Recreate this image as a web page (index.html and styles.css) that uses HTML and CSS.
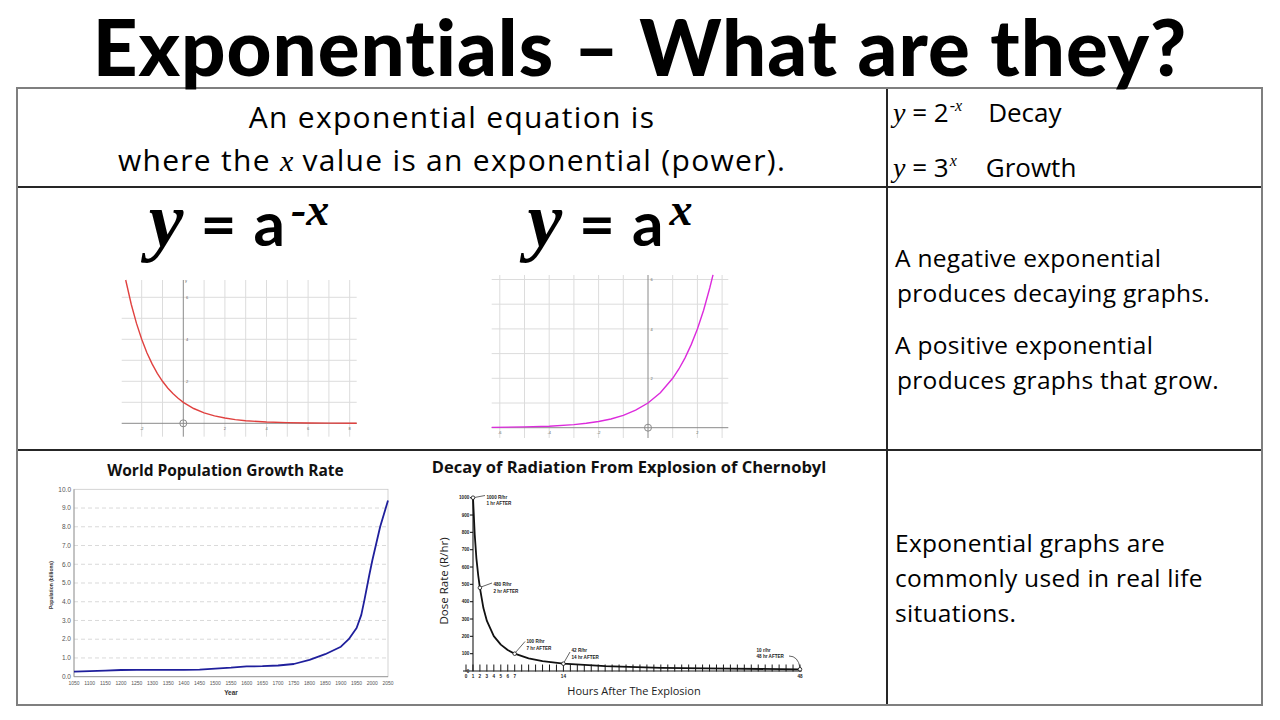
FILE: index.html
```html
<!DOCTYPE html>
<html lang="en">
<head>
<meta charset="utf-8">
<title>Exponentials – What are they?</title>
<link rel="stylesheet" href="styles.css">
</head>
<body>
<h1 class="title">Exponentials – What are they?</h1>
<div class="table">
  <div class="cell def c-left r1">
    <p>An exponential equation is</p>
    <p>where the <span class="var">x</span> value is an exponential (power).</p>
  </div>
  <div class="cell examples r1">
    <p><span class="m">y</span> = 2<span class="ex">-x</span><span class="lbl">Decay</span></p>
    <p><span class="m">y</span> = 3<span class="ex">x</span><span class="lbl lbl2">Growth</span></p>
  </div>

  <div class="cell graphs c-left r2">
    <div class="gcol gcol1">
      <div class="formula"><span class="fy">y</span> = a<span class="fsup">-x</span></div>
      <svg class="plot" width="242" height="172" viewBox="0 0 242 172">
        <g class="grid">
          <line x1="23.7" y1="10" x2="23.7" y2="166.7"/>
          <line x1="44.5" y1="10" x2="44.5" y2="166.7"/>
          <line x1="86.1" y1="10" x2="86.1" y2="166.7"/>
          <line x1="106.9" y1="10" x2="106.9" y2="166.7"/>
          <line x1="127.7" y1="10" x2="127.7" y2="166.7"/>
          <line x1="148.5" y1="10" x2="148.5" y2="166.7"/>
          <line x1="169.3" y1="10" x2="169.3" y2="166.7"/>
          <line x1="190.1" y1="10" x2="190.1" y2="166.7"/>
          <line x1="210.9" y1="10" x2="210.9" y2="166.7"/>
          <line x1="231.7" y1="10" x2="231.7" y2="166.7"/>
          <line x1="3.7" y1="132.3" x2="238.7" y2="132.3"/>
          <line x1="3.7" y1="111.3" x2="238.7" y2="111.3"/>
          <line x1="3.7" y1="90.3" x2="238.7" y2="90.3"/>
          <line x1="3.7" y1="69.3" x2="238.7" y2="69.3"/>
          <line x1="3.7" y1="48.3" x2="238.7" y2="48.3"/>
          <line x1="3.7" y1="27.3" x2="238.7" y2="27.3"/>
        </g>
        <g class="axis">
          <line x1="65.3" y1="10" x2="65.3" y2="166.7"/>
          <line x1="3.7" y1="153.3" x2="238.7" y2="153.3"/>
          <circle cx="65.3" cy="153.3" r="3.5"/>
        </g>
        <g class="tick">
          <text x="67" y="12">y</text>
          <text x="68" y="29">6</text>
          <text x="68" y="71">4</text>
          <text x="68" y="113">2</text>
          <text x="23.7" y="159.5" text-anchor="middle">-2</text>
          <text x="106.9" y="159.5" text-anchor="middle">2</text>
          <text x="148.5" y="159.5" text-anchor="middle">4</text>
          <text x="190.1" y="159.5" text-anchor="middle">6</text>
          <text x="231.7" y="159.5" text-anchor="middle">8</text>
        </g>
        <polyline class="curve-red" points="7.7,10 13.3,34.5 18.5,53.4 23.7,69.3 28.9,82.7 34.1,93.9 39.3,103.4 44.5,111.3 49.7,118 54.9,123.6 60.1,128.3 65.3,132.3 75.7,138.5 86.1,142.8 96.5,145.9 106.9,148.05 117.3,149.6 127.7,150.7 148.5,152 169.3,152.6 190.1,153 210.9,153.1 238.7,153.3"/>
      </svg>
    </div>
    <div class="gcol gcol2">
      <div class="formula"><span class="fy">y</span> = a<span class="fsup">x</span></div>
      <svg class="plot" width="244" height="172" viewBox="0 0 244 172">
        <g class="grid">
          <line x1="11.8" y1="5" x2="11.8" y2="168"/>
          <line x1="36.5" y1="5" x2="36.5" y2="168"/>
          <line x1="61.2" y1="5" x2="61.2" y2="168"/>
          <line x1="85.9" y1="5" x2="85.9" y2="168"/>
          <line x1="110.6" y1="5" x2="110.6" y2="168"/>
          <line x1="135.3" y1="5" x2="135.3" y2="168"/>
          <line x1="184.7" y1="5" x2="184.7" y2="168"/>
          <line x1="209.4" y1="5" x2="209.4" y2="168"/>
          <line x1="234.1" y1="5" x2="234.1" y2="168"/>
          <line x1="3.7" y1="133" x2="240.3" y2="133"/>
          <line x1="3.7" y1="108.3" x2="240.3" y2="108.3"/>
          <line x1="3.7" y1="83.6" x2="240.3" y2="83.6"/>
          <line x1="3.7" y1="58.9" x2="240.3" y2="58.9"/>
          <line x1="3.7" y1="34.2" x2="240.3" y2="34.2"/>
          <line x1="3.7" y1="9.5" x2="240.3" y2="9.5"/>
        </g>
        <g class="axis">
          <line x1="160" y1="5" x2="160" y2="168"/>
          <line x1="3.7" y1="157.7" x2="240.3" y2="157.7"/>
          <circle cx="160" cy="157.7" r="3.5"/>
        </g>
        <g class="tick">
          <text x="162.5" y="11">6</text>
          <text x="162.5" y="60.5">4</text>
          <text x="162.5" y="110">2</text>
          <text x="11.8" y="164" text-anchor="middle">-6</text>
          <text x="61.2" y="164" text-anchor="middle">-4</text>
          <text x="110.6" y="164" text-anchor="middle">-2</text>
          <text x="209.4" y="164" text-anchor="middle">2</text>
        </g>
        <polyline class="curve-pink" points="3.7,157.4 36.5,156.9 61.2,156.2 85.9,154.6 98.25,153.3 110.6,151.5 122.95,149 135.3,145.35 147.65,140.2 160,133 172.35,122.8 184.7,108.3 190.9,99 197.05,87.85 203.2,74.6 209.4,58.9 215.6,40.2 221.75,18 225,4.8"/>
      </svg>
    </div>
  </div>
  <div class="cell notes r2">
    <p>A negative exponential<br><span class="ind">produces decaying graphs.</span></p>
    <p>A positive exponential<br><span class="ind">produces graphs that grow.</span></p>
  </div>

  <div class="cell real c-left">
    <svg class="chart" width="360" height="249" viewBox="0 0 360 249">
      <text class="ctitle" x="185.5" y="21" text-anchor="middle">World Population Growth Rate</text>
      <g class="dash">
        <line x1="34" y1="202.96" x2="348" y2="202.96"/>
        <line x1="34" y1="184.22" x2="348" y2="184.22"/>
        <line x1="34" y1="165.48" x2="348" y2="165.48"/>
        <line x1="34" y1="146.74" x2="348" y2="146.74"/>
        <line x1="34" y1="128" x2="348" y2="128"/>
        <line x1="34" y1="109.26" x2="348" y2="109.26"/>
        <line x1="34" y1="90.52" x2="348" y2="90.52"/>
        <line x1="34" y1="71.78" x2="348" y2="71.78"/>
        <line x1="34" y1="53.04" x2="348" y2="53.04"/>
      </g>
      <rect class="frame" x="34" y="34.3" width="314" height="187.4"/>
      <g class="paxis">
        <line x1="34" y1="34.3" x2="34" y2="221.7"/>
        <line x1="34" y1="221.7" x2="348" y2="221.7"/>
      </g>
      <g class="plabel" text-anchor="end">
        <text x="31" y="36.5">10.0</text>
        <text x="31" y="55.2">9.0</text>
        <text x="31" y="74">8.0</text>
        <text x="31" y="92.7">7.0</text>
        <text x="31" y="111.5">6.0</text>
        <text x="31" y="130.2">5.0</text>
        <text x="31" y="149">4.0</text>
        <text x="31" y="167.7">3.0</text>
        <text x="31" y="186.4">2.0</text>
        <text x="31" y="205.2">1.0</text>
        <text x="31" y="223.9">0.0</text>
      </g>
      <g class="xlabel" text-anchor="middle">
        <text x="34" y="230">1050</text>
        <text x="49.7" y="230">1100</text>
        <text x="65.4" y="230">1150</text>
        <text x="81.1" y="230">1200</text>
        <text x="96.8" y="230">1250</text>
        <text x="112.5" y="230">1300</text>
        <text x="128.2" y="230">1350</text>
        <text x="143.9" y="230">1400</text>
        <text x="159.6" y="230">1450</text>
        <text x="175.3" y="230">1500</text>
        <text x="191" y="230">1550</text>
        <text x="206.7" y="230">1600</text>
        <text x="222.4" y="230">1650</text>
        <text x="238.1" y="230">1700</text>
        <text x="253.8" y="230">1750</text>
        <text x="269.5" y="230">1800</text>
        <text x="285.2" y="230">1850</text>
        <text x="300.9" y="230">1900</text>
        <text x="316.6" y="230">1950</text>
        <text x="332.3" y="230">2000</text>
        <text x="348" y="230">2050</text>
      </g>
      <text class="axt" x="191" y="240" text-anchor="middle">Year</text>
      <text class="axt-s" transform="translate(13,130) rotate(-90)" text-anchor="middle">Population (billions)</text>
      <polyline class="curve-blue" points="34,216.6 49.7,216.1 65.4,215.7 81.1,215 96.8,214.8 112.5,214.8 143.9,214.8 159.6,214.6 175.3,213.6 191,212.7 206.7,211.4 222.4,211.2 238.1,210.5 253.8,209 269.5,204.8 285.2,199.2 300.9,191.7 308.75,184.2 316.6,173 321.3,159.9 324.45,144.9 329.2,120.5 332.3,105.5 340.15,71.8 348,45.5"/>
    </svg>

    <svg class="chart" width="415" height="249" viewBox="0 0 415 249">
      <text class="ctitle ctitle2" x="204" y="18" text-anchor="middle">Decay of Radiation From Explosion of Chernobyl</text>
      <g class="ink">
        <line x1="38" y1="216" x2="376.7" y2="216"/>
        <line x1="48" y1="42.7" x2="48" y2="216"/>
        <line class="xticks" x1="40.5" y1="213" x2="376" y2="213"/>
        <line x1="45" y1="198.67" x2="48" y2="198.67"/>
        <line x1="45" y1="181.34" x2="48" y2="181.34"/>
        <line x1="45" y1="164.01" x2="48" y2="164.01"/>
        <line x1="45" y1="146.68" x2="48" y2="146.68"/>
        <line x1="45" y1="129.35" x2="48" y2="129.35"/>
        <line x1="45" y1="112.02" x2="48" y2="112.02"/>
        <line x1="45" y1="94.69" x2="48" y2="94.69"/>
        <line x1="45" y1="77.36" x2="48" y2="77.36"/>
        <line x1="45" y1="60.03" x2="48" y2="60.03"/>
        <line x1="45" y1="42.7" x2="48" y2="42.7"/>
      </g>
      <g class="clabel" text-anchor="end">
        <text x="44.3" y="217.5">0</text>
        <text x="44.3" y="200.2">100</text>
        <text x="44.3" y="182.9">200</text>
        <text x="44.3" y="165.5">300</text>
        <text x="44.3" y="148.2">400</text>
        <text x="44.3" y="130.9">500</text>
        <text x="44.3" y="113.5">600</text>
        <text x="44.3" y="96.2">700</text>
        <text x="44.3" y="78.9">800</text>
        <text x="44.3" y="61.5">900</text>
        <text x="44.3" y="44.2">1000</text>
      </g>
      <g class="clabel" text-anchor="middle">
        <text x="41" y="222.8">0</text>
        <text x="48" y="222.8">1</text>
        <text x="54.9" y="222.8">2</text>
        <text x="61.9" y="222.8">3</text>
        <text x="68.8" y="222.8">4</text>
        <text x="75.8" y="222.8">5</text>
        <text x="82.7" y="222.8">6</text>
        <text x="89.7" y="222.8">7</text>
        <text x="138.4" y="222.8">14</text>
        <text x="375" y="222.8">48</text>
      </g>
      <polyline class="curve-black" points="48,42.7 49.7,79.3 51.4,103.3 53.2,120.25 54.9,132.8 58.4,153.1 61.9,165.9 68.8,181.1 75.8,189.6 82.7,195 89.7,198.7 103.6,203.35 117.5,206.2 138.4,208.7 180.2,211.2 235.8,212.8 305.4,213.7 375,214.3"/>
      <g class="lead">
        <path d="M49.5 42.5 L60 40.5"/>
        <path d="M56 132 L67 128"/>
        <path d="M90.5 197.5 L100 186.5"/>
        <path d="M139 207.5 L145 197"/>
        <path d="M364 201 Q373 201 375 212.5"/>
      </g>
      <g class="pts">
        <circle cx="48" cy="42.7" r="1.8"/>
        <circle cx="54.9" cy="132.8" r="1.8"/>
        <circle cx="89.7" cy="198.7" r="1.8"/>
        <circle cx="138.4" cy="208.7" r="1.8"/>
        <circle cx="375" cy="214.3" r="1.8"/>
      </g>
      <g class="note">
        <text x="61.5" y="43.5">1000 R/hr</text>
        <text x="61.5" y="50">1 hr AFTER</text>
        <text x="68.5" y="131">480 R/hr</text>
        <text x="68.5" y="138">2 hr AFTER</text>
        <text x="101.5" y="187.5">100 R/hr</text>
        <text x="101.5" y="194.5">7 hr AFTER</text>
        <text x="146.5" y="197">42 R/hr</text>
        <text x="146.5" y="203.5">14 hr AFTER</text>
        <text x="331.5" y="196.5">10 r/hr</text>
        <text x="331.5" y="203">48 hr AFTER</text>
      </g>
      <text class="dose" transform="translate(22.5,126) rotate(-90)" text-anchor="middle">Dose Rate (R/hr)</text>
      <text class="hours" x="209" y="240" text-anchor="middle">Hours After The Explosion</text>
    </svg>
  </div>
  <div class="cell notes notes2">
    <p>Exponential graphs are<br>commonly used in real life<br>situations.</p>
  </div>
</div>
</body>
</html>
```

FILE: styles.css
```css
html, body {
  margin: 0;
  padding: 0;
  background: #ffffff;
}

body {
  width: 1280px;
  height: 720px;
  overflow: hidden;
  color: #000;
  font-family: "Open Sans", Lato, sans-serif;
}

.title {
  margin: 0 0 -6.6px 0;
  font-family: Lato, "DejaVu Sans", sans-serif;
  font-weight: 900;
  font-size: 78px;
  line-height: 93.6px;
  text-align: center;
  white-space: nowrap;
  letter-spacing: 1px;
}

.table {
  margin-left: 16px;
  width: 1247px;
  height: 619px;
  box-sizing: border-box;
  border: 2px solid #7f7f7f;
  display: grid;
  grid-template-columns: 870px 1fr;
  grid-template-rows: 99px 263px 1fr;
}

.cell {
  box-sizing: border-box;
  min-width: 0;
  min-height: 0;
}

.cell p {
  margin: 0;
}

.c-left {
  border-right: 2px solid #262626;
}

.r1,
.r2 {
  border-bottom: 2px solid #262626;
}

/* row 1 */
.def {
  padding-top: 6px;
  text-align: center;
  font-size: 30px;
  line-height: 43px;
  letter-spacing: 1.3px;
}

.var {
  font-family: "Liberation Serif", serif;
  font-style: italic;
  letter-spacing: 0;
}

.examples {
  padding: 7px 0 0 5px;
  font-size: 26px;
  line-height: 32px;
}

.examples p {
  margin-bottom: 22px;
  white-space: nowrap;
}

.m {
  font-family: "Liberation Serif", serif;
  font-style: italic;
  font-size: 28px;
}

.ex {
  font-family: "Liberation Serif", serif;
  font-style: italic;
  font-size: 16px;
  vertical-align: 11px;
  line-height: 0;
  margin-left: 1px;
}

.lbl {
  margin-left: 26px;
}

.lbl2 {
  margin-left: 29px;
}

/* row 2 */
.graphs {
  display: flex;
  padding-left: 100px;
  gap: 128px;
}

.gcol {
  display: flex;
  flex-direction: column;
}

.gcol1 {
  width: 242px;
}

.gcol2 {
  width: 244px;
}

.formula {
  height: 82px;
  line-height: 64px;
  text-align: center;
  font-family: Lato, sans-serif;
  font-weight: 700;
  font-size: 62px;
  white-space: nowrap;
  word-spacing: 2px;
}

.fy {
  font-family: "Liberation Serif", serif;
  font-style: italic;
  font-weight: 700;
  font-size: 78px;
}

.fsup {
  font-family: "Liberation Serif", serif;
  font-style: italic;
  font-weight: 700;
  font-size: 46px;
  vertical-align: 21px;
  line-height: 0;
  margin-left: 6px;
}

.plot,
.chart {
  display: block;
}

.grid line {
  stroke: #dcdcdc;
  stroke-width: 1;
}

.axis line,
.axis circle {
  stroke: #8a8a8a;
  stroke-width: 1;
  fill: none;
}

.tick {
  font-family: "Liberation Sans", sans-serif;
  font-size: 4px;
  fill: #666;
}

.curve-red {
  fill: none;
  stroke: #e0413f;
  stroke-width: 1.4;
}

.curve-pink {
  fill: none;
  stroke: #dc2bdc;
  stroke-width: 1.4;
}

.notes {
  display: flex;
  flex-direction: column;
  justify-content: center;
  padding-left: 7px;
  font-size: 24.5px;
  line-height: 35px;
  letter-spacing: 0.3px;
}

.notes p + p {
  margin-top: 16.6px;
}

.ind {
  padding-left: 2px;
}

/* row 3 */
.real {
  display: flex;
  align-items: flex-start;
  padding: 4px 0 0 22px;
  gap: 25px;
}

.ctitle {
  font-family: "Open Sans", sans-serif;
  font-weight: 700;
  font-size: 15.5px;
  fill: #111;
}

.ctitle2 {
  font-size: 16.5px;
}

.dash line {
  stroke: #cfcfcf;
  stroke-width: 0.8;
  stroke-dasharray: 4 3;
}

.frame {
  fill: none;
  stroke: #c9c9c9;
  stroke-width: 0.8;
}

.paxis line {
  stroke: #8c8c8c;
  stroke-width: 0.8;
}

.plabel {
  font-family: "Liberation Sans", sans-serif;
  font-size: 6.5px;
  fill: #555;
}

.xlabel {
  font-family: "Liberation Sans", sans-serif;
  font-size: 5px;
  fill: #555;
}

.axt {
  font-family: "Liberation Sans", sans-serif;
  font-weight: 700;
  font-size: 6.5px;
  fill: #333;
}

.axt-s {
  font-family: "Liberation Sans", sans-serif;
  font-weight: 700;
  font-size: 5px;
  fill: #333;
}

.curve-blue {
  fill: none;
  stroke: #1f1f9c;
  stroke-width: 1.8;
  stroke-linejoin: round;
}

.ink line {
  stroke: #1a1a1a;
  stroke-width: 1.1;
}

.ink .xticks {
  stroke-width: 7;
  stroke-dasharray: 1 5.958;
}

.clabel {
  font-family: "Liberation Sans", sans-serif;
  font-weight: 700;
  font-size: 4.6px;
  fill: #222;
}

.curve-black {
  fill: none;
  stroke: #111;
  stroke-width: 1.8;
  stroke-linejoin: round;
}

.lead path {
  fill: none;
  stroke: #222;
  stroke-width: 0.7;
}

.pts circle {
  fill: #fff;
  stroke: #111;
  stroke-width: 0.8;
}

.note {
  font-family: "Liberation Sans", sans-serif;
  font-weight: 700;
  font-size: 4.6px;
  fill: #222;
}

.dose {
  font-family: "Open Sans", sans-serif;
  font-size: 11.5px;
  fill: #222;
}

.hours {
  font-family: "Open Sans", sans-serif;
  font-size: 11px;
  fill: #222;
}
```
